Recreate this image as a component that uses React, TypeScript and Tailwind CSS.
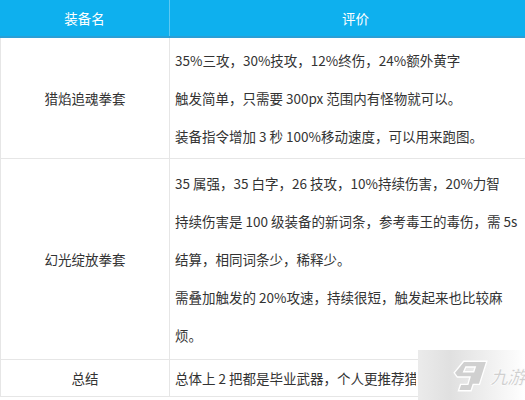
import React from 'react';

const font = { fontFamily: '"Microsoft YaHei", "Noto Sans CJK SC", "Noto Sans", sans-serif' };

function Lines({ lines }: { lines: string[] }) {
  return (
    <div>
      {lines.map((l, i) => (
        <div key={i} className="whitespace-nowrap">
          {l}
        </div>
      ))}
    </div>
  );
}

function Watermark() {
  return (
    <div className="pointer-events-none absolute bottom-0 right-0 flex h-[50px] w-[107px] items-center justify-end bg-gradient-to-r from-[#ebebeb] via-[#e0e0e0] via-30% to-white pt-[2px]">
      <svg width="40" height="34" viewBox="0 0 38 32" aria-hidden className="shrink-0">
        <path
          d="M13 2 L35 2 L28 24 L22 24 L20 30 L8 30 L10 24 L17 24 L19 17 L7 17 L4 13 Z M15 7.5 L13 12 L22.5 12 L24 7.5 Z"
          fill="#d0d0d0"
          stroke="#ffffff"
          strokeWidth="1.3"
          fillRule="evenodd"
        />
      </svg>
      <span
        className="shrink-0 whitespace-nowrap pr-[1px] text-[18px] font-bold italic leading-none tracking-[-1px] text-[#cfcfcf]"
        style={{ WebkitTextStroke: '0.6px #ffffff' }}
      >
        九游
      </span>
    </div>
  );
}

export default function App() {
  return (
    <div className="relative h-[400px] w-[525px] overflow-hidden bg-white text-[13.5px] text-[#333333]" style={font}>
      <div className="w-[541px]">
        <div className="flex h-[38px] border-b-2 border-[#2a9fd6] bg-[#0eb0ee] text-white">
          <div className="flex w-[170px] items-center justify-center border-r border-[#5cc8f2]">装备名</div>
          <div className="flex flex-1 items-center justify-center">评价</div>
        </div>

        <div className="flex border-b border-[#e6e6e6]">
          <div className="flex w-[170px] items-center justify-center border-r border-l border-[#e6e6e6]">猎焰追魂拳套</div>
          <div className="flex-1 py-[3px] pl-[5px] leading-[38px]">
            <Lines
              lines={[
                '35%三攻，30%技攻，12%终伤，24%额外黄字',
                '触发简单，只需要 300px 范围内有怪物就可以。',
                '装备指令增加 3 秒 100%移动速度，可以用来跑图。',
              ]}
            />
          </div>
        </div>

        <div className="flex border-b border-[#e6e6e6]">
          <div className="flex w-[170px] items-center justify-center border-r border-l border-[#e6e6e6]">幻光绽放拳套</div>
          <div className="flex-1 py-[5px] pl-[5px] leading-[38px]">
            <Lines
              lines={[
                '35 属强，35 白字，26 技攻，10%持续伤害，20%力智',
                '持续伤害是 100 级装备的新词条，参考毒王的毒伤，需 5s',
                '结算，相同词条少，稀释少。',
                '需叠加触发的 20%攻速，持续很短，触发起来也比较麻',
                '烦。',
              ]}
            />
          </div>
        </div>

        <div className="flex border-b border-[#e6e6e6]">
          <div className="flex w-[170px] items-center justify-center border-r border-l border-[#e6e6e6]">总结</div>
          <div className="flex-1 pl-[5px] leading-[36px]">
            <div className="w-[241px] overflow-hidden whitespace-nowrap">总体上 2 把都是毕业武器，个人更推荐猎</div>
          </div>
        </div>
      </div>
      <Watermark />
    </div>
  );
}
